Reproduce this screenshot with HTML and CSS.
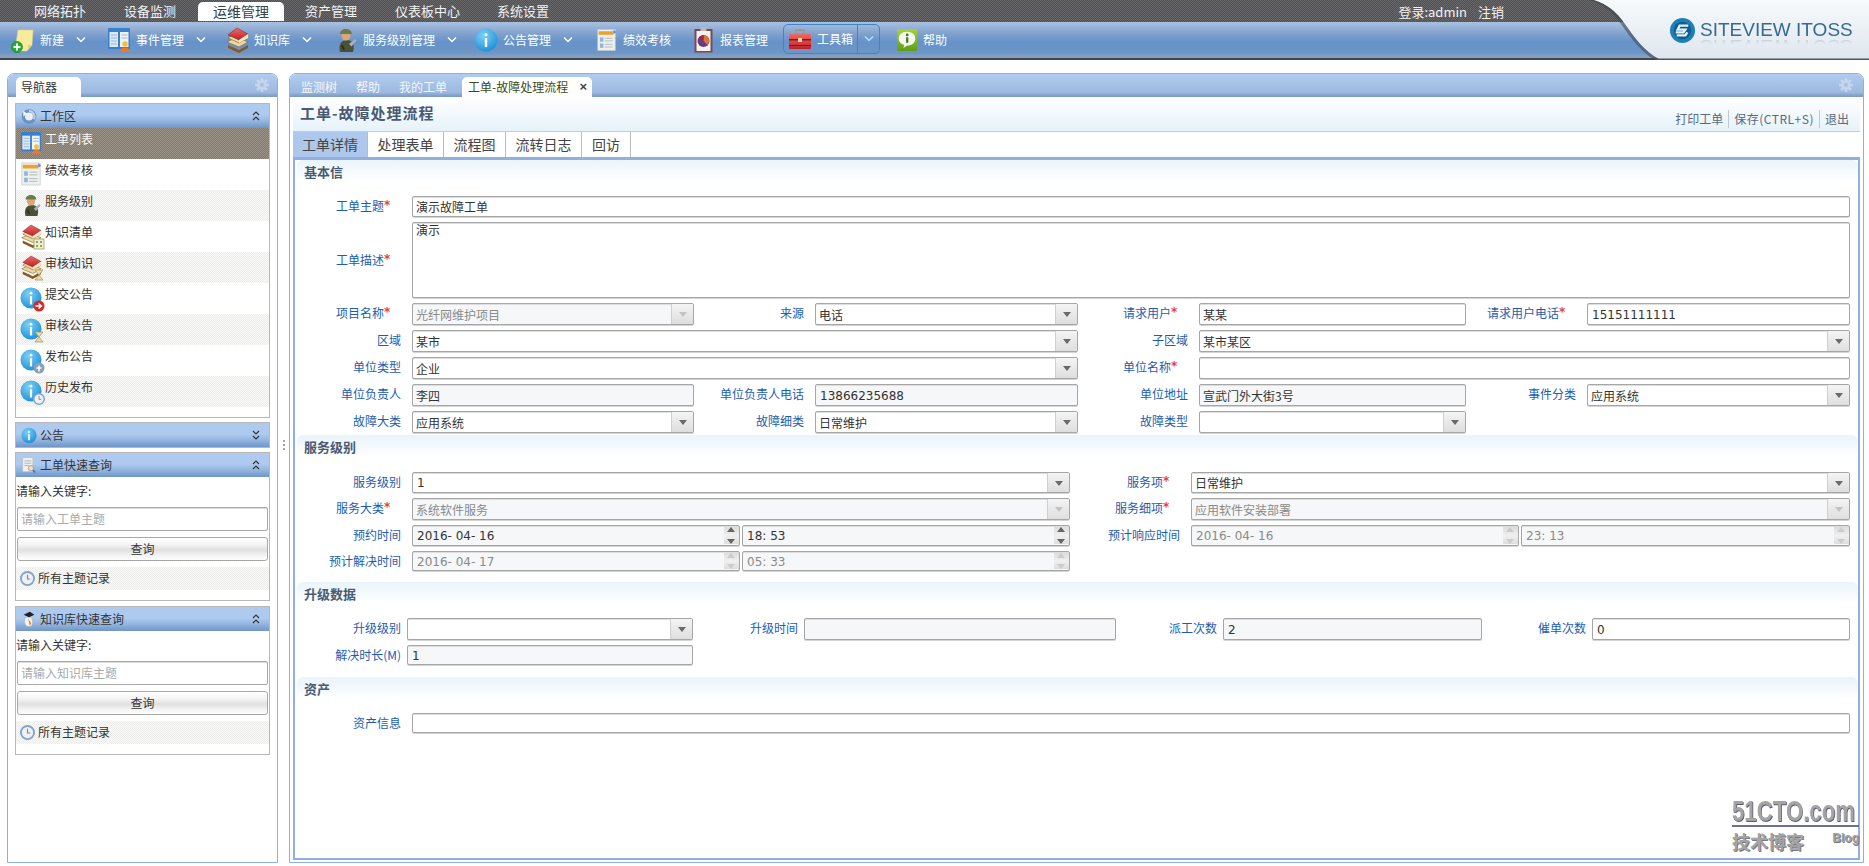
FILE: index.html
```html
<!DOCTYPE html>
<html lang="zh-CN">
<head>
<meta charset="utf-8">
<title>工单-故障处理流程</title>
<link rel="stylesheet" href="styles.css">
</head>
<body>
<svg class="defs" width="0" height="0" aria-hidden="true">
  <defs>
    <radialGradient id="gInfo" cx="40%" cy="30%" r="75%"><stop offset="0" stop-color="#7fd0f5"/><stop offset="1" stop-color="#1b8fd6"/></radialGradient>
    <linearGradient id="gRed" x1="0" y1="0" x2="0" y2="1"><stop offset="0" stop-color="#ee6a66"/><stop offset="1" stop-color="#c02028"/></linearGradient>
    <linearGradient id="gGreen" x1="0" y1="0" x2="0" y2="1"><stop offset="0" stop-color="#a4d33c"/><stop offset="1" stop-color="#5f9e18"/></linearGradient>
    <symbol id="i-note" viewBox="0 0 24 26"><path d="M7 3h15l-1 15-5 6H4z" fill="#f8ec9a" stroke="#d8d0a0" stroke-width=".6"/><path d="M16 24l1-6h4z" fill="#e0d48a"/><circle cx="6" cy="20" r="5.5" fill="#22b02c" stroke="#127a18" stroke-width=".6"/><path d="M6 16.5v7M2.5 20h7" stroke="#fff" stroke-width="2"/></symbol>
    <symbol id="i-event" viewBox="0 0 24 26"><rect x="1" y="1" width="22" height="21" fill="#3b7ecb" rx="1"/><rect x="2.5" y="5" width="8.5" height="15" fill="#dbe8f5"/><rect x="13" y="5" width="8.5" height="15" fill="#eef4fa"/><path d="M4 8h6M4 11h6M4 14h6M4 17h6M14.500 8h6M14.500 11h6" stroke="#9db8d4"/><circle cx="18" cy="17" r="2.700" fill="#f4c040"/><path d="M13 25c0-6 10-6 10 0z" fill="#ee7a20"/></symbol>
    <symbol id="i-books" viewBox="0 0 24 26"><path d="M3 18l11 5 9-5v3l-9 5-11-5z" fill="#8a5a20"/><path d="M2 15l12 5 9-5-11-5z" fill="#e8d9a8" stroke="#8a5a20" stroke-width=".6"/><path d="M3 11l11 5 9-5-11-6z" fill="#e8d9a8" stroke="#8a5a20" stroke-width=".6"/><path d="M3 8l11 5 9-6-11-6z" fill="url(#gRed)" stroke="#7a1818" stroke-width=".5"/><path d="M14 13v3l9-5V7z" fill="#f3e8c4"/></symbol>
    <symbol id="i-soldier" viewBox="0 0 24 26"><path d="M6 25c-2-7 1-12 7-12s8 5 6 12z" fill="#4c5238"/><circle cx="12" cy="9" r="4.500" fill="#d8a878"/><path d="M6 7c0-6 11-7 12 0z" fill="#6e7a48"/><path d="M15 17l6-5 1.500 1.500-5 6z" fill="#aab0b8"/><path d="M8 18l2 5" stroke="#2c3020" stroke-width="2"/></symbol>
    <symbol id="i-info" viewBox="0 0 24 24"><circle cx="12" cy="12" r="11.500" fill="url(#gInfo)"/><rect x="10.800" y="10" width="2.400" height="9" fill="#fff"/><circle cx="12" cy="6.800" r="1.500" fill="#fff"/></symbol>
    <symbol id="i-doc" viewBox="0 0 24 26"><rect x="2" y="1" width="20" height="24" fill="#f0f0ea" stroke="#c4c8cc" stroke-width=".8"/><rect x="3" y="3" width="17" height="4" fill="#f0a030"/><path d="M20 1l3 3-3 2z" fill="#3f8fe0"/><path d="M10 11h9M10 14h9M10 18h9M10 21h9" stroke="#a8b8c8"/><rect x="4.500" y="10" width="4" height="5" fill="#8fb8dc"/><rect x="4.500" y="17" width="4" height="5" fill="#8fb8dc"/></symbol>
    <symbol id="i-clip" viewBox="0 0 20 26"><rect x="1" y="2" width="18" height="23.500" fill="#7a4a50"/><rect x="3" y="4" width="14" height="20" fill="#f4f2ee"/><rect x="7" y="0" width="6" height="4" fill="#c0b8b0"/><circle cx="10" cy="14" r="6" fill="#6a3a80"/><path d="M10 14V8a6 6 0 0 1 4 10z" fill="#d8763a"/><path d="M10 14l-4-3a6 6 0 0 1 4-3z" fill="#b02030"/></symbol>
    <symbol id="i-box" viewBox="0 0 24 24"><path d="M8 7V3h8v4" fill="none" stroke="#9a9a9a" stroke-width="2"/><rect x="1" y="7" width="22" height="15" rx="1" fill="url(#gRed)"/><rect x="1" y="12" width="22" height="1.500" fill="#8c1418"/><rect x="1" y="18" width="22" height="1" fill="#8c1418"/><rect x="10" y="11" width="4" height="4" fill="#f0d0a0"/></symbol>
    <symbol id="i-help" viewBox="0 0 24 26"><rect x="1" y="1" width="22" height="24" rx="1.500" fill="url(#gGreen)"/><path d="M12 4c6 0 9 3.500 9 7.500S18 19 12 19l-4 3 1-3.500C5 17 3 14.500 3 11.500 3 7.500 6 4 12 4z" fill="#f4f6f0"/><rect x="11" y="10" width="2.400" height="6" fill="#3a7a18"/><circle cx="12.200" cy="7.500" r="1.500" fill="#3a7a18"/></symbol>
    <symbol id="i-work" viewBox="0 0 16 18"><circle cx="8" cy="9" r="6" fill="#e9eff6" stroke="#6a93bd" stroke-width="3.500"/><path d="M8 3a6 6 0 0 1 5 9" fill="none" stroke="#c6d4e4" stroke-width="2"/><path d="M2 3l4 3-4 3z" fill="#f4f6f8"/></symbol>
    <symbol id="i-clock" viewBox="0 0 16 16"><circle cx="8" cy="8" r="7" fill="#eef2f6" stroke="#7fa4d0" stroke-width="2"/><path d="M8 4v4.500h3" fill="none" stroke="#808890" stroke-width="1.200"/></symbol>
    <symbol id="i-query" viewBox="0 0 18 22"><rect x="1" y="1" width="13" height="18" fill="#eef0f0" stroke="#b8bcc0" stroke-width=".7"/><path d="M3 5h9M3 8h9M3 11h6" stroke="#a0a8b0"/><circle cx="11.500" cy="14.500" r="3.500" fill="#cfe4f4" stroke="#d88a30"/><path d="M14 17l3 3" stroke="#2a78c8" stroke-width="2"/></symbol>
    <symbol id="i-tux" viewBox="0 0 16 22"><path d="M4 8c-3 5-2 12 4 12s5-7 3-12z" fill="#f2f2f0" stroke="#b0b0b0" stroke-width=".6"/><path d="M1 5l8-4 6 4-7 3z" fill="#222"/><path d="M7 10l2 9 2-3z" fill="#e8842a"/></symbol>
    <symbol id="i-gear" viewBox="0 0 16 16"><g fill="#c6d6ea"><circle cx="8" cy="8" r="5.500"/><rect x="6.500" y="0" width="3" height="16"/><rect x="0" y="6.500" width="16" height="3"/><rect x="6.500" y="0" width="3" height="16" transform="rotate(45 8 8)"/><rect x="6.500" y="0" width="3" height="16" transform="rotate(-45 8 8)"/></g><circle cx="8" cy="8" r="2.500" fill="#a9c3e6"/></symbol>
    <symbol id="b-check" viewBox="0 0 12 12"><rect x="1" y="1" width="10" height="10" fill="#f2ecd0" stroke="#a09060" stroke-width=".7"/><path d="M3 4h2M7 4h2M3 8h2M7 8h2" stroke="#4ea040" stroke-width="1.500"/></symbol>
    <symbol id="b-hour" viewBox="0 0 12 12"><path d="M2 1h8L6 6l4 5H2l4-5z" fill="#e8dca8" stroke="#a09060" stroke-width=".7"/></symbol>
    <symbol id="b-go" viewBox="0 0 12 12"><circle cx="6" cy="6" r="5.500" fill="#d82828"/><path d="M2.500 6h5M5.500 3.500L8.500 6l-3 2.500" fill="none" stroke="#fff" stroke-width="1.400"/></symbol>
    <symbol id="b-up" viewBox="0 0 12 12"><circle cx="6" cy="6" r="5.500" fill="#8a9fb8"/><path d="M6 9.500v-6M3.500 6h5" stroke="#fff" stroke-width="1.500"/></symbol>
    <symbol id="chev" viewBox="0 0 10 8"><path d="M1 1.500l4 4 4-4" fill="none" stroke="currentColor" stroke-width="1.500"/></symbol>
    <symbol id="dbl-up" viewBox="0 0 8 10"><path d="M1 4l3-3 3 3M1 9l3-3 3 3" fill="none" stroke="#333" stroke-width="1.200"/></symbol>
    <symbol id="dbl-down" viewBox="0 0 8 10"><path d="M1 1l3 3 3-3M1 6l3 3 3-3" fill="none" stroke="#333" stroke-width="1.200"/></symbol>
  </defs>
</svg>

<header class="app-head">
  <div class="top-bar">
    <nav class="top-nav">
      <a class="nav-item w-a">网络拓扑</a>
      <a class="nav-item w-b">设备监测</a>
      <a class="nav-item nav-active">运维管理</a>
      <a class="nav-item w-c">资产管理</a>
      <a class="nav-item w-d">仪表板中心</a>
      <a class="nav-item w-e">系统设置</a>
    </nav>
    <div class="user-box"><span>登录:admin</span><span>注销</span></div>
  </div>
  <div class="tool-bar">
    <a class="tool t-new"><svg class="tic"><use href="#i-note"/></svg><span>新建</span><svg class="chev"><use href="#chev"/></svg></a>
    <a class="tool t-evt"><svg class="tic"><use href="#i-event"/></svg><span>事件管理</span><svg class="chev"><use href="#chev"/></svg></a>
    <a class="tool t-kno"><svg class="tic"><use href="#i-books"/></svg><span>知识库</span><svg class="chev"><use href="#chev"/></svg></a>
    <a class="tool t-svc"><svg class="tic"><use href="#i-soldier"/></svg><span>服务级别管理</span><svg class="chev"><use href="#chev"/></svg></a>
    <a class="tool t-ann"><svg class="tic"><use href="#i-info"/></svg><span>公告管理</span><svg class="chev"><use href="#chev"/></svg></a>
    <a class="tool t-kpi"><svg class="tic"><use href="#i-doc"/></svg><span>绩效考核</span></a>
    <a class="tool t-rep"><svg class="tic"><use href="#i-clip"/></svg><span>报表管理</span></a>
    <a class="tool t-box"><svg class="tic"><use href="#i-box"/></svg><span>工具箱</span><i class="t-div"></i><svg class="chev chev-hot"><use href="#chev"/></svg></a>
    <a class="tool t-hlp"><svg class="tic"><use href="#i-help"/></svg><span>帮助</span></a>
  </div>
  <div class="brand">
    <svg class="brand-bg" viewBox="0 0 280 60" preserveAspectRatio="none" aria-hidden="true">
      <defs><linearGradient id="gBrand" x1="0" y1="0" x2="0" y2="1"><stop offset="0" stop-color="#f6fafc"/><stop offset="1" stop-color="#dfe6ee"/></linearGradient></defs>
      <path d="M0 0C14 4 24 12 32 24 42 38 52 52 66 60H280V0z" fill="#3a4450" opacity=".55"/>
      <path d="M5 0C18 4 28 12 36 24 46 38 56 52 70 59H280V0z" fill="url(#gBrand)"/>
      <rect y="58.500" width="280" height="1.500" x="66" fill="#555"/>
    </svg>
    <svg class="brand-mark" viewBox="0 0 28 28" aria-hidden="true">
      <circle cx="14" cy="14" r="13" fill="#1d7fb8"/><circle cx="14" cy="14" r="9" fill="#0f5c90"/>
      <path d="M20 9H11l-2 4h8l-2 3H7M8 19h9l2-3" fill="none" stroke="#e6f3fa" stroke-width="2.400"/>
    </svg>
    <span class="brand-name">SITEVIEW ITOSS</span>
  </div>
</header>

<main class="workspace">
  <aside class="panel nav-panel">
    <div class="panel-tabs">
      <a class="ptab ptab-nav">导航器</a>
      <svg class="gear"><use href="#i-gear"/></svg>
    </div>
    <div class="nav-body">
      <section class="pane pane-work">
        <h3 class="pane-head h25"><svg class="pic"><use href="#i-work"/></svg><span>工作区</span><svg class="dbl"><use href="#dbl-up"/></svg></h3>
        <ul class="menu">
          <li class="selected"><span class="mic"><svg class="mic-main"><use href="#i-event"/></svg></span><span>工单列表</span></li>
          <li><span class="mic"><svg class="mic-main"><use href="#i-doc"/></svg></span><span>绩效考核</span></li>
          <li class="alt"><span class="mic"><svg class="mic-main"><use href="#i-soldier"/></svg></span><span>服务级别</span></li>
          <li><span class="mic"><svg class="mic-main"><use href="#i-books"/></svg><svg class="badge"><use href="#b-check"/></svg></span><span>知识清单</span></li>
          <li class="alt"><span class="mic"><svg class="mic-main"><use href="#i-books"/></svg><svg class="badge"><use href="#b-hour"/></svg></span><span>审核知识</span></li>
          <li><span class="mic"><svg class="mic-main"><use href="#i-info"/></svg><svg class="badge"><use href="#b-go"/></svg></span><span>提交公告</span></li>
          <li class="alt"><span class="mic"><svg class="mic-main"><use href="#i-info"/></svg><svg class="badge"><use href="#b-hour"/></svg></span><span>审核公告</span></li>
          <li><span class="mic"><svg class="mic-main"><use href="#i-info"/></svg><svg class="badge"><use href="#b-up"/></svg></span><span>发布公告</span></li>
          <li class="alt"><span class="mic"><svg class="mic-main"><use href="#i-info"/></svg><svg class="badge"><use href="#i-clock"/></svg></span><span>历史发布</span></li>
        </ul>
      </section>
      <section class="pane pane-notice">
        <h3 class="pane-head h26"><svg class="pic"><use href="#i-info"/></svg><span>公告</span><svg class="dbl"><use href="#dbl-down"/></svg></h3>
      </section>
      <section class="pane pane-q">
        <h3 class="pane-head h24"><svg class="pic"><use href="#i-query"/></svg><span>工单快速查询</span><svg class="dbl"><use href="#dbl-up"/></svg></h3>
        <div class="q-label">请输入关键字:</div>
        <div class="q-input">请输入工单主题</div>
        <button class="q-btn">查询</button>
        <div class="q-row"><svg class="q-clock"><use href="#i-clock"/></svg><span>所有主题记录</span></div>
      </section>
      <section class="pane pane-q">
        <h3 class="pane-head h24"><svg class="pic"><use href="#i-tux"/></svg><span>知识库快速查询</span><svg class="dbl"><use href="#dbl-up"/></svg></h3>
        <div class="q-label">请输入关键字:</div>
        <div class="q-input">请输入知识库主题</div>
        <button class="q-btn">查询</button>
        <div class="q-row"><svg class="q-clock"><use href="#i-clock"/></svg><span>所有主题记录</span></div>
      </section>
    </div>
  </aside>

  <div class="gutter"><i></i><i></i><i></i></div>

  <section class="panel doc-panel">
    <div class="panel-tabs">
      <a class="ptab">监测树</a>
      <a class="ptab">帮助</a>
      <a class="ptab">我的工单</a>
      <a class="ptab ptab-doc">工单-故障处理流程<b class="x">×</b></a>
      <svg class="gear"><use href="#i-gear"/></svg>
    </div>
    <div class="doc-title">
      <h1>工单-故障处理流程</h1>
      <div class="doc-actions"><a>打印工单</a><a class="act-save">保存(CTRL+S)</a><a>退出</a></div>
    </div>
    <div class="sub-tabs">
      <a class="stab stab-on">工单详情</a>
      <a class="stab s76">处理表单</a>
      <a class="stab s62">流程图</a>
      <a class="stab s76">流转日志</a>
      <a class="stab s48">回访</a>
    </div>
    <div class="frame">
      <h2 class="sec">基本信</h2>
      <div class="form f-basic">
        <label class="req">工单主题<em>*</em></label><div class="fd span7"><span>演示故障工单</span></div>
        <label class="req lab-mid">工单描述<em>*</em></label><div class="fd span7 area"><span>演示</span></div>

        <label class="req">项目名称<em>*</em></label><div class="fd sel off muted"><span>光纤网维护项目</span><i class="dd"></i></div>
        <label>来源</label><div class="fd sel"><span>电话</span><i class="dd"></i></div>
        <label class="req">请求用户<em>*</em></label><div class="fd"><span>某某</span></div>
        <label class="req">请求用户电话<em>*</em></label><div class="fd num"><span>15151111111</span></div>

        <label>区域</label><div class="fd sel span3"><span>某市</span><i class="dd"></i></div>
        <label>子区域</label><div class="fd sel span3"><span>某市某区</span><i class="dd"></i></div>

        <label>单位类型</label><div class="fd sel span3"><span>企业</span><i class="dd"></i></div>
        <label class="req">单位名称<em>*</em></label><div class="fd span3"></div>

        <label>单位负责人</label><div class="fd ro"><span>李四</span></div>
        <label>单位负责人电话</label><div class="fd ro num"><span>13866235688</span></div>
        <label>单位地址</label><div class="fd ro"><span>宣武门外大街3号</span></div>
        <label>事件分类</label><div class="fd sel"><span>应用系统</span><i class="dd"></i></div>

        <label>故障大类</label><div class="fd sel"><span>应用系统</span><i class="dd"></i></div>
        <label>故障细类</label><div class="fd sel"><span>日常维护</span><i class="dd"></i></div>
        <label>故障类型</label><div class="fd sel"><i class="dd"></i></div>
      </div>

      <h2 class="sec sec-2">服务级别</h2>
      <div class="form f-service">
        <label>服务级别</label><div class="fd sel num"><span>1</span><i class="dd"></i></div>
        <label class="req">服务项<em>*</em></label><div class="fd sel"><span>日常维护</span><i class="dd"></i></div>

        <label class="req">服务大类<em>*</em></label><div class="fd sel off muted"><span>系统软件服务</span><i class="dd"></i></div>
        <label class="req">服务细项<em>*</em></label><div class="fd sel off muted"><span>应用软件安装部署</span><i class="dd"></i></div>

        <label>预约时间</label>
        <div class="pair"><div class="fd ro num spin date"><span>2016- 04- 16</span><i class="sp"></i></div><div class="fd ro num spin"><span>18: 53</span><i class="sp"></i></div></div>
        <label>预计响应时间</label>
        <div class="pair"><div class="fd ro num spin muted date"><span>2016- 04- 16</span><i class="sp off"></i></div><div class="fd ro num spin muted"><span>23: 13</span><i class="sp off"></i></div></div>

        <label>预计解决时间</label>
        <div class="pair"><div class="fd ro num spin muted date"><span>2016- 04- 17</span><i class="sp off"></i></div><div class="fd ro num spin muted"><span>05: 33</span><i class="sp off"></i></div></div>
      </div>

      <h2 class="sec sec-3">升级数据</h2>
      <div class="form f-upgrade">
        <label>升级级别</label><div class="fd sel"><i class="dd"></i></div>
        <label>升级时间</label><div class="fd ro"></div>
        <label>派工次数</label><div class="fd ro num"><span>2</span></div>
        <label>催单次数</label><div class="fd num"><span>0</span></div>
        <label>解决时长(M)</label><div class="fd ro num"><span>1</span></div>
      </div>

      <h2 class="sec sec-4">资产</h2>
      <div class="form f-asset">
        <label>资产信息</label><div class="fd"></div>
      </div>

      <div class="wm">
        <div class="wm-top">51CTO.com</div>
        <div class="wm-bot"><span>技术博客</span><span class="wm-blog">Blog</span></div>
      </div>
    </div>
  </section>
</main>
</body>
</html>
```

FILE: styles.css
```css
* { box-sizing: border-box; }
html, body { margin: 0; height: 866px; overflow: hidden; }
body {
  font: 12px/1.2 "Noto Sans CJK SC", "Noto Sans", sans-serif;
  color: #333;
  background: #fff;
  display: flex;
  flex-direction: column;
}
.defs { position: absolute; }
a { cursor: default; }

/* header */
.app-head { position: relative; height: 60px; flex: none; }
.top-bar {
  height: 22px;
  display: flex;
  justify-content: space-between;
  background: repeating-conic-gradient(#4f4f52 0 25%, #6a6a6c 0 50%) 0 0 / 2px 2px;
  color: #f2f2f2;
}
.top-nav { display: flex; padding-left: 34px; font-size: 13px; line-height: 22px; }
.nav-item { display: block; }
.w-a { width: 90px; }
.w-b { width: 74px; }
.w-c { width: 90px; margin-left: 21px; }
.w-d { width: 102px; }
.w-e { width: 60px; }
.nav-active {
  width: 86px;
  height: 19px;
  margin-top: 2px;
  line-height: 19px;
  text-align: center;
  font-size: 14px;
  color: #33424f;
  background: #fff;
  border-radius: 5px 5px 0 0;
}
.user-box { display: flex; gap: 11px; margin-right: 365px; line-height: 24px; font-size: 13px; }

.tool-bar {
  height: 38px;
  display: flex;
  align-items: flex-start;
  background: linear-gradient(#a9c1e0 0, #7e9fcb 35%, #6593ca 55%, #6e95c6 85%, #86a0c0 96%);
  border-bottom: 2px solid #3f4650;
  color: #fff;
}
.tool { display: flex; align-items: center; height: 36px; position: relative; flex: none; }
.tic { width: 24px; height: 26px; flex: none; }
.tool > span { margin-left: 5px; line-height: 36px; white-space: nowrap; flex: none; }
.chev { width: 10px; height: 8px; margin-left: 12px; flex: none; color: #fff; }
.t-new { margin-left: 11px; width: 96px; }
.t-evt { width: 118px; }
.t-kno { width: 109px; }
.t-svc { width: 140px; }
.t-ann { width: 122px; }
.t-kpi { width: 97px; }
.t-kpi .tic, .t-rep .tic { width: 21px; }
.t-kpi > span, .t-rep > span { margin-left: 6px; }
.t-rep { width: 90px; }
.t-box {
  width: 97px;
  height: 30px;
  margin-top: 2px;
  padding-left: 4px;
  border: 1px solid #3f86c8;
  border-radius: 5px;
}
.t-box > span { line-height: 28px; }
.t-div { position: absolute; left: 73px; top: 0; bottom: 0; width: 1px; background: #3f86c8; }
.chev-hot { margin-left: 11px; color: #a6e4ff; }
.t-hlp { margin-left: 16px; }
.t-hlp .tic { width: 22px; }

.brand { position: absolute; top: 0; right: 0; width: 280px; height: 60px; }
.brand-bg { position: absolute; inset: 0; width: 100%; height: 100%; }
.brand-mark { position: absolute; left: 80px; top: 17px; width: 27px; height: 27px; }
.brand-name {
  position: absolute;
  left: 111px;
  top: 18px;
  font: 19px/24px "Liberation Sans", sans-serif;
  white-space: pre;
  color: #356a92;
  -webkit-box-reflect: below -8px linear-gradient(transparent 55%, rgba(255,255,255,.45));
}

/* workspace */
.workspace {
  flex: 1;
  min-height: 0;
  display: flex;
  padding: 13px 5px 3px 7px;
}
.panel {
  display: flex;
  flex-direction: column;
  background: #fff;
  border: 1px solid #8fb0de;
  border-radius: 7px 7px 0 0;
}
.nav-panel { width: 271px; flex: none; }
.doc-panel { flex: 1; min-width: 0; padding: 0 3px 2px 3px; }
.gutter {
  width: 11px;
  flex: none;
  display: flex;
  flex-direction: column;
  justify-content: center;
  align-items: center;
  gap: 2px;
  margin-top: -46px;
}
.gutter i { width: 2px; height: 2px; background: #9aa4b0; }

.panel-tabs {
  height: 23px;
  flex: none;
  display: flex;
  align-items: flex-end;
  position: relative;
  background: linear-gradient(#b0ccf0, #9db9e0 80%, #7f9cc6 96%);
  border-radius: 6px 6px 0 0;
  padding-left: 8px;
}
.doc-panel .panel-tabs { margin: 0 -3px; padding-left: 11px; }
.ptab { display: block; height: 20px; line-height: 20px; color: #f4f7fc; margin-right: 19px; }
.ptab-nav {
  width: 65px;
  margin: 0;
  padding-left: 5px;
  background: #fff;
  color: #333;
  border-radius: 5px 5px 0 0;
}
.ptab-doc {
  width: 130px;
  margin: 0 0 0 -4px;
  padding-left: 6px;
  background: #fff;
  color: #3d4a12;
  border-radius: 5px 5px 0 0;
  display: flex;
  justify-content: space-between;
  padding-right: 5px;
}
.x { font: bold 13px/20px "Liberation Sans", sans-serif; color: #444; }
.gear { position: absolute; right: 8px; top: 4px; width: 14px; height: 14px; }
.doc-panel .gear { right: 10px; }

.nav-body { flex: 1; padding: 6px 7px 0 7px; display: flex; flex-direction: column; gap: 4px; }
.pane { border: 1px solid #b8b8b8; }
.pane-work { height: 315px; }
.pane-notice { height: 26px; }
.pane-q { padding-bottom: 10px; }
.pane-q + .pane-q { margin-top: 1px; }
.pane-head {
  margin: 0;
  display: flex;
  align-items: center;
  font-weight: 400;
  font-size: 12px;
  padding-left: 5px;
  color: #333;
  background: linear-gradient(#aecbef 0, #aecbef 45%, #95b6e0 70%, #6f96c8 100%);
}
.h25 { height: 24px; }
.h26 { height: 24px; }
.h24 { height: 24px; }
.pic { width: 16px; height: 17px; flex: none; margin-right: 3px; }
.dbl { width: 8px; height: 10px; margin-left: auto; margin-right: 9px; }

.menu { list-style: none; margin: 0; padding: 0; }
.menu li {
  height: 31px;
  display: flex;
  align-items: flex-start;
  padding-left: 4px;
  line-height: 22px;
}
.menu li.selected { background: repeating-conic-gradient(#7d7a76 0 25%, #9c9488 0 50%) 0 0 / 2px 2px; color: #fbfbfb; }
.menu li.alt { background: repeating-conic-gradient(#ececea 0 25%, #fafaf8 0 50%) 0 0 / 2px 2px; }
.mic { position: relative; display: block; width: 25px; height: 26px; margin-top: 3px; flex: none; }
.mic-main { width: 22px; height: 24px; display: block; }
.badge { position: absolute; right: 0; bottom: 0; width: 12px; height: 12px; }

.q-label { height: 30px; line-height: 27px; }
.q-input {
  height: 24px;
  margin: 0 1px;
  padding-left: 3px;
  line-height: 22px;
  color: #aaa;
  border: 1px solid #a8a8a8;
  border-radius: 2px;
  box-shadow: inset 0 1px 0 #ddd;
}
.q-btn {
  display: block;
  width: calc(100% - 2px);
  height: 24px;
  margin: 6px 1px 0;
  padding: 0;
  font: inherit;
  color: #333;
  border: 1px solid #a8a8a8;
  border-radius: 3px;
  background: linear-gradient(#fff, #f4f4f4 30%, #e0e0e0 55%, #f0f0f0 75%, #fff);
}
.q-row {
  height: 23px;
  margin-top: 6px;
  display: flex;
  align-items: center;
  gap: 3px;
  padding-left: 4px;
  background: repeating-conic-gradient(#ececea 0 25%, #fafaf8 0 50%) 0 0 / 2px 2px;
}
.q-clock { width: 15px; height: 15px; }

/* document */
.doc-title {
  height: 35px;
  flex: none;
  display: flex;
  justify-content: space-between;
  align-items: center;
  padding: 0 11px 0 7px;
  background: linear-gradient(#fff, #e6f2fa);
  border-bottom: 1px solid #b7d0e8;
}
.doc-title h1 { margin: 0 0 2px; font-size: 15px; letter-spacing: 1px; color: #4a5a72; }
.doc-actions { display: flex; margin-top: 10px; color: #5a6a80; }
.doc-actions a { padding: 0 5px; border-right: 1px solid #c0c8d0; line-height: 18px; }
.doc-actions a:last-child { border: 0; padding-right: 0; }
.act-save { letter-spacing: .5px; }
.sub-tabs { height: 25px; flex: none; display: flex; background: #fff; }
.stab { display: block; text-align: center; font-size: 14px; line-height: 25px; color: #444; border-right: 1px solid #bcbcbc; }
.stab-on { width: 75px; background: #adc8ec; }
.s76 { width: 76px; }
.s62 { width: 62px; }
.s48 { width: 49px; }

.frame {
  flex: 1;
  min-height: 0;
  position: relative;
  border: 2px solid #8fb0e0;
  border-top-width: 3px;
}
.sec {
  height: 22px;
  margin: 0 0 14px 2px;
  padding-left: 7px;
  font-size: 13px;
  line-height: 24px;
  color: #4a5a72;
  border-radius: 6px 6px 0 0;
  background: linear-gradient(#e9f4fb, #fff);
}
.sec-2 { margin-top: 2px; margin-bottom: 15px; }
.sec-3 { margin-top: 11px; }
.sec-4 { margin-top: 12px; }

.form { display: grid; row-gap: 5px; margin-right: 8px; align-items: stretch; }
.f-basic {
  grid-template-columns: 117px 282px 121px 263px 121px 267px 121px 263px;
  grid-template-rows: 21px 76px repeat(5, 22px);
}
.f-service {
  grid-template-columns: 117px 658px 121px 659px;
  grid-template-rows: 21px 22px 21px 20px;
}
.f-upgrade {
  grid-template-columns: 112px 286px 111px 312px 107px 259px 110px 258px;
  grid-template-rows: 22px 20px;
}
.f-asset { grid-template-columns: 117px 1fr; grid-template-rows: 20px; }
.form label { color: #1c5db0; text-align: right; padding-right: 11px; line-height: 20px; white-space: nowrap; }
.f-upgrade label { padding-right: 6px; }
.form label em {
  display: inline-block;
  width: 17px;
  text-align: left;
  color: #e84040;
  font: bold 12px/12px "DejaVu Sans", sans-serif;
  vertical-align: 2px;
}
.lab-mid { padding-top: 28px; }
.span7 { grid-column: span 7; }
.span3 { grid-column: span 3; }

.fd {
  position: relative;
  display: flex;
  align-items: center;
  min-width: 0;
  padding-left: 3px;
  background: #fff;
  color: #333;
  border: 1px solid #a6a6a6;
  border-radius: 2px;
  box-shadow: inset 0 1px 0 #dedede, 0 1px 0 #d4d4d4;
  white-space: nowrap;
  overflow: hidden;
}
.fd span { position: relative; top: 1px; }
.area { align-items: flex-start; }
.area span { top: 0; }
.num { font-family: "DejaVu Sans", "Noto Sans CJK SC", sans-serif; padding-left: 4px; }
.ro { background: #f5f7f8; }
.off { background: #f5f7f8; }
.muted { color: #8a8a8a; }
.sel { padding-right: 22px; }
.dd {
  position: absolute;
  top: 0; right: 0; bottom: 0;
  width: 22px;
  background: linear-gradient(#f4f4f4, #dedede);
  border-left: 1px solid #cfcfcf;
}
.dd::after {
  content: "";
  position: absolute;
  left: 7px; top: 50%;
  margin-top: -2px;
  border: 4px solid transparent;
  border-top: 5px solid #6a6a6a;
  border-bottom: 0;
}
.off .dd::after { border-top-color: #c4c4c4; }
.pair { display: grid; grid-template-columns: 328px 1fr; column-gap: 2px; min-width: 0; }
.spin .sp {
  position: absolute;
  top: 1px; right: 0; bottom: 1px;
  width: 15px;
  background: linear-gradient(#ddd, #f0f0f0 50%, #ddd);
}
.sp::before, .sp::after {
  content: "";
  position: absolute;
  left: 3px;
  border: 4px solid transparent;
}
.sp::before { top: 0; border-bottom: 5px solid #666; border-top: 0; }
.sp::after { bottom: 0; border-top: 5px solid #666; border-bottom: 0; }
.sp.off::before { border-bottom-color: #ccc; }
.sp.off::after { border-top-color: #ccc; }

/* watermark */
.wm { position: absolute; right: -1px; bottom: 7px; width: 127px; height: 53px; color: #a4a4a4; }
.wm-top {
  font: bold 30px/25px "Liberation Sans", sans-serif;
  transform: scaleX(.74);
  transform-origin: 0 0;
  white-space: nowrap;
  text-shadow: 1px 1px 0 #5a5a70;
  height: 27px;
}
.wm-bot {
  display: flex;
  justify-content: space-between;
  align-items: flex-start;
  border-top: 2px solid #70708a;
  padding-top: 3px;
  font: bold 18px/22px "Noto Sans CJK SC", sans-serif;
  text-shadow: 1px 1px 0 #77778a;
}
.wm-blog { font: bold 12px/16px "Liberation Sans", sans-serif; }
```
